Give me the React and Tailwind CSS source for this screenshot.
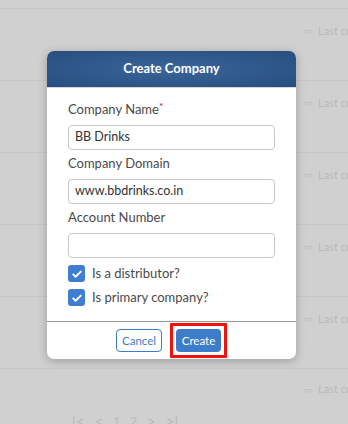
import React from "react";

const rows = [0, 1, 2, 3, 4];

function Check() {
  return (
    <span className="flex h-[17px] w-[17px] shrink-0 items-center justify-center rounded-[3px] bg-[#3f7dd0]">
      <svg viewBox="0 0 16 16" className="h-[12px] w-[12px]" fill="none" stroke="#fff" strokeWidth="2.6" strokeLinecap="round" strokeLinejoin="round">
        <path d="M3 8.5l3.2 3.2L13 4.8" />
      </svg>
    </span>
  );
}

function Field({ label, required, value }) {
  return (
    <div className="flex flex-col">
      <label className="mb-[7px] h-[17px] text-[13px] leading-[17px] text-[#4a4a4a]">
        {label}
        {required && <span className="relative -top-[4px] text-[10px] text-[#d0021b]">*</span>}
      </label>
      <div className="flex h-[25px] items-center rounded-[4px] border border-[#c8c8c8] bg-white px-[6px] text-[12.5px] text-[#333]">
        {value}
      </div>
    </div>
  );
}

export default function App() {
  return (
    <div className="relative h-[424px] w-[348px] overflow-hidden bg-[#d0d0d0] font-['Lato',sans-serif]">
      {/* page behind the overlay */}
      <div className="flex flex-col pt-[8px]">
        {rows.map((r) => (
          <div key={r} className="flex h-[72px] overflow-hidden border-t border-[#c7c7c7] pt-[14px] pl-[304px] whitespace-nowrap text-[11px] text-[#b9b9b9]">
            <span className="mr-[5px] mt-[1px] text-[9px]">▭</span>Last con
          </div>
        ))}
        <div className="flex flex-col border-t border-[#c7c7c7] pt-[12px]">
          <div className="overflow-hidden pl-[304px] whitespace-nowrap text-[11px] text-[#b9b9b9]">
            <span className="mr-[5px] text-[9px]">▭</span>Last con
          </div>
          <div className="mt-[12px] flex items-center gap-[10px] pl-[72px] text-[15px] text-[#b8b8b8]">
            <span>|&lt;</span>
            <span>&lt;</span>
            <span className="text-[12px]">1</span>
            <span className="text-[12px]">2</span>
            <span>&gt;</span>
            <span>&gt;|</span>
          </div>
        </div>
      </div>

      {/* modal */}
      <div className="absolute left-[47px] top-[51px] w-[249px] overflow-hidden rounded-[7px] bg-white shadow-[0_2px_10px_rgba(0,0,0,0.25)]">
        <div className="flex h-[37px] items-center justify-center border-b border-[#d6d6d6] bg-[radial-gradient(ellipse_at_center,#3a669b_0%,#2c5487_70%,#284e80_100%)] text-[13px] font-bold text-white">
          Create Company
        </div>
        <div className="flex flex-col gap-[5px] px-[21px] pt-[13px]">
          <Field label="Company Name" required value="BB Drinks" />
          <Field label="Company Domain" value="www.bbdrinks.co.in" />
          <Field label="Account Number" value="" />
        </div>
        <div className="flex flex-col gap-[7px] px-[21px] pt-[7px] pb-[15px]">
          <div className="flex h-[17px] items-center gap-[7px] text-[13px] text-[#4a4a4a]">
            <Check />
            Is a distributor?
          </div>
          <div className="flex h-[17px] items-center gap-[7px] text-[13px] text-[#4a4a4a]">
            <Check />
            Is primary company?
          </div>
        </div>
        <div className="flex h-[38px] items-center justify-center gap-[8px] border-t border-[#9a9a9a]">
          <button className="h-[23px] w-[46px] rounded-[4px] border border-[#3d7cc9] bg-white text-[11.5px] text-[#3d7cc9]">
            Cancel
          </button>
          <div className="rounded-[1px] border-[3px] border-[#f0120c] p-[3px]">
            <button className="block h-[23px] w-[45px] rounded-[4px] bg-[#3d7cc9] text-[11.5px] text-white">
              Create
            </button>
          </div>
        </div>
      </div>
    </div>
  );
}
